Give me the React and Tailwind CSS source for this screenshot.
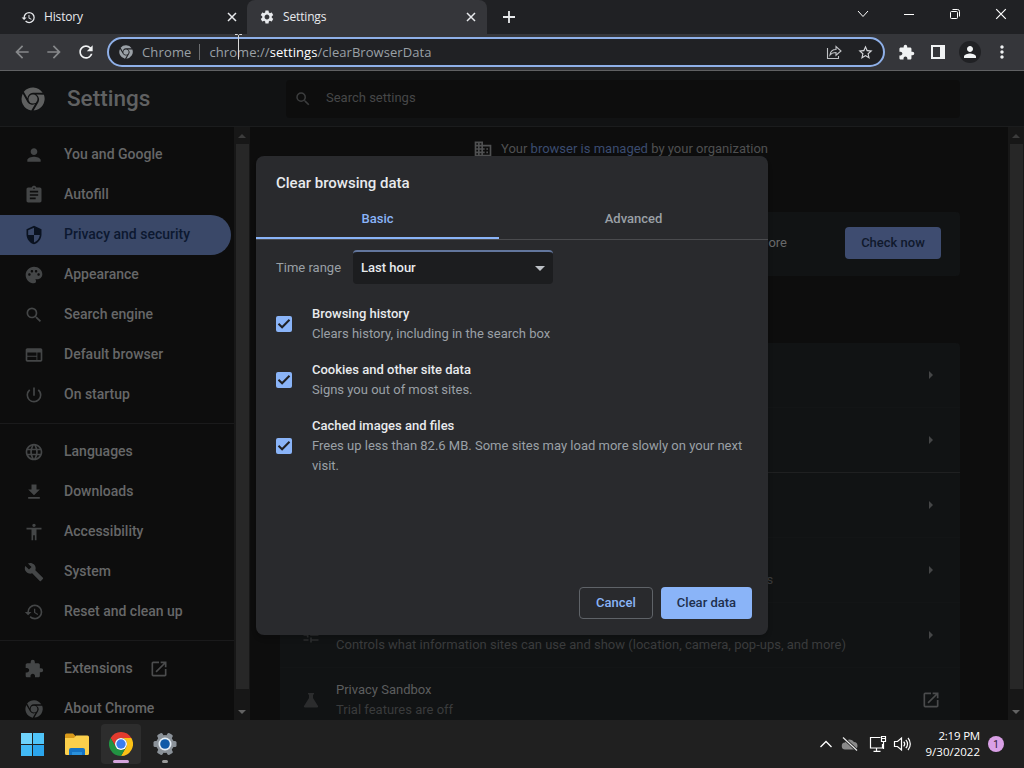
import { useState } from "react";
import {
  MdAccessibility,
  MdAssignment,
  MdBuild,
  MdDomain,
  MdExtension,
  MdFileDownload,
  MdHistory,
  MdLanguage,
  MdOpenInNew,
  MdPalette,
  MdPerson,
  MdPowerSettingsNew,
  MdSearch,
  MdSecurity,
  MdSettings,
  MdStarBorder,
  MdTune,
  MdWeb,
  MdArrowBack,
  MdArrowForward,
  MdRefresh,
  MdMoreVert,
} from "react-icons/md";

const ChromeMark = ({ className }) => (
  <svg viewBox="0 0 48 48" className={className} fill="currentColor">
    <circle cx="24" cy="24" r="9" />
    {[0, 120, 240].map((angle) => (
      <path
        key={angle}
        transform={`rotate(${angle} 24 24)`}
        d="M24 11.5h19.3A23.5 23.5 0 0 0 5.6 9.4L13 22.6A11.6 11.6 0 0 1 24 11.5z"
      />
    ))}
  </svg>
);

const ChromeLogo = () => (
  <svg viewBox="0 0 48 48" className="size-6">
    <path d="M24 12h20.78a24 24 0 0 0-41.57 0l10.4 18A12 12 0 0 1 24 12z" fill="#e33b2e" />
    <path d="M24 12h20.78a24 24 0 0 0-41.57 0l10.4 18A12 12 0 0 1 24 12z" fill="#fbc116" transform="rotate(120 24 24)" />
    <path d="M24 12h20.78a24 24 0 0 0-41.57 0l10.4 18A12 12 0 0 1 24 12z" fill="#229342" transform="rotate(240 24 24)" />
    <circle cx="24" cy="24" r="12" fill="#fff" />
    <circle cx="24" cy="24" r="9.4" fill="#3b7ded" />
  </svg>
);

const menuGroups = [
  [
    { label: "You and Google", icon: MdPerson },
    { label: "Autofill", icon: MdAssignment },
    { label: "Privacy and security", icon: MdSecurity, active: true },
    { label: "Appearance", icon: MdPalette },
    { label: "Search engine", icon: MdSearch },
    { label: "Default browser", icon: MdWeb },
    { label: "On startup", icon: MdPowerSettingsNew },
  ],
  [
    { label: "Languages", icon: MdLanguage },
    { label: "Downloads", icon: MdFileDownload },
    { label: "Accessibility", icon: MdAccessibility },
    { label: "System", icon: MdBuild },
    { label: "Reset and clean up", icon: MdHistory },
  ],
  [
    { label: "Extensions", icon: MdExtension, external: true },
    { label: "About Chrome", icon: ChromeMark, mark: true },
  ],
];

const privacyRows = [
  {},
  { divider: true },
  {},
  { sub: "Safe Browsing (protection from dangerous sites) and other security settings" },
  {
    icon: MdTune,
    sub: "Controls what information sites can use and show (location, camera, pop-ups, and more)",
  },
  { icon: "flask", title: "Privacy Sandbox", sub: "Trial features are off", external: true },
];

const CloseX = ({ className }) => (
  <svg viewBox="0 0 10 10" className={className} fill="none" stroke="currentColor">
    <path d="M1 1l8 8M9 1l-8 8" />
  </svg>
);

const TabStrip = () => (
  <div className="flex h-[34px] bg-[#202124] font-['Open_Sans',sans-serif] text-[12px] text-[#e8eaed]">
    <div className="flex h-full w-[247px] items-center pl-[21px] pr-[10px]">
      <MdHistory className="size-[15px]" />
      <span className="ml-2 flex-1 tracking-[-0.15px]">History</span>
      <CloseX className="size-[10px] stroke-[1.5]" />
    </div>
    <div className="flex h-full w-[240px] items-center rounded-t-lg bg-[#35363a] pl-[12px] pr-[11px]">
      <MdSettings className="size-4" />
      <span className="ml-2 flex-1 tracking-[-0.15px]">Settings</span>
      <CloseX className="size-[10px] stroke-[1.5]" />
    </div>
    <div className="flex flex-1 items-center pl-4">
      <svg viewBox="0 0 12 12" className="size-3" stroke="currentColor" strokeWidth="1.8">
        <path d="M6 0v12M0 6h12" />
      </svg>
    </div>
    <div className="flex h-7 text-white">
      <div className="flex w-[46px] items-center justify-center">
        <svg viewBox="0 0 12 8" className="w-3" fill="none" stroke="currentColor">
          <path d="M1 1l5 5.5L11 1" />
        </svg>
      </div>
      <div className="flex w-[46px] items-center justify-center">
        <div className="h-px w-[10px] bg-white" />
      </div>
      <div className="flex w-[46px] items-center justify-center">
        <svg viewBox="0 0 12 12" className="size-3" fill="none" stroke="currentColor">
          <rect x="1.5" y="3.5" width="7" height="7" rx="1" />
          <path d="M3.5 1.5h5a2 2 0 0 1 2 2v5" />
        </svg>
      </div>
      <div className="flex w-[46px] items-center justify-center">
        <CloseX className="size-3" />
      </div>
    </div>
  </div>
);

const Toolbar = () => (
  <div className="flex h-[37px] items-center border-b border-[#606163] bg-[#35363a] px-[6px] text-[#f1f3f4]">
    <div className="flex w-8 justify-center text-[#86888a]">
      <MdArrowBack className="size-5" />
    </div>
    <div className="flex w-8 justify-center text-[#86888a]">
      <MdArrowForward className="size-5" />
    </div>
    <div className="flex w-8 justify-center">
      <MdRefresh className="size-5" />
    </div>
    <div className="mx-[5px] flex h-[30px] w-[778px] items-center rounded-full border-2 border-[#8fb0e8] bg-[#202124] pl-[10px] pr-[9px] font-['Open_Sans',sans-serif] text-[13px] text-[#9aa0a6]">
      <ChromeMark className="size-[14px]" />
      <span className="ml-[9px] w-[49px] pt-px whitespace-nowrap tracking-[0.15px]">Chrome</span>
      <div className="mr-[10px] ml-[7.5px] h-4 w-px bg-[#6b6d70]" />
      <span className="flex-1 pt-px tracking-[0.06px]">
        chrome://<span className="text-white">settings</span>/clearBrowserData
      </span>
      <svg viewBox="0 0 16 16" className="mr-[15px] size-4" fill="none" stroke="#c0c2c5" strokeWidth="1.1">
        <path d="M1.5 4v10.5h11V12" />
        <path d="M4 11c.5-4 2.5-5.5 6-5.5V2.500l5 4.500-5 4.200V8.500C7.500 8.500 5.500 9 4 11z" />
      </svg>
      <MdStarBorder className="size-[17px] text-[#d5d7da]" />
    </div>
    <div className="flex w-8 justify-center">
      <MdExtension className="size-[17px]" />
    </div>
    <div className="flex w-8 justify-center">
      <div className="h-[14px] w-[14px] border-2 border-r-[5px] border-[#f1f3f4]" />
    </div>
    <div className="flex w-8 justify-center">
      <div className="flex size-[22px] items-center justify-center rounded-full bg-[#202124]">
        <MdPerson className="size-[18px]" />
      </div>
    </div>
    <div className="flex w-8 justify-center">
      <MdMoreVert className="size-5" />
    </div>
  </div>
);

const Scrollbar = ({ thumb }) => (
  <div className="flex w-4 shrink-0 flex-col items-center bg-[#171717]">
    <div className="flex h-[17px] items-center">
      <div className="border-x-4 border-b-4 border-x-transparent border-b-[#3c3c3c]" />
    </div>
    <div className={`w-[13px] bg-[#272727] ${thumb}`} />
    <div className="mt-auto flex h-[17px] items-center">
      <div className="border-x-4 border-t-4 border-x-transparent border-t-[#626262]" />
    </div>
  </div>
);

const MenuItem = ({ item }) => {
  const Icon = item.icon;
  return (
    <div
      className={`flex h-10 w-[231px] shrink-0 items-center rounded-r-full pl-6 ${
        item.active ? "bg-[#3a4868] text-[#0c1830]" : "text-[#666768]"
      }`}
    >
      <div className={`flex w-5 justify-center ${item.active ? "text-[#0a1220]" : "text-[#444647]"}`}>
        <Icon className={item.mark ? "size-[18px]" : "size-5"} />
      </div>
      <span className="ml-5 pb-0.5">{item.label}</span>
      {item.external && <MdOpenInNew className="ml-4 size-[20px] text-[#4b4c4d]" />}
    </div>
  );
};

const Sidebar = () => (
  <div className="flex w-[234px] shrink-0 flex-col overflow-hidden pt-2 text-sm font-medium">
    {menuGroups.map((group, i) => (
      <div key={i} className={`flex shrink-0 flex-col ${i > 0 ? "mt-2 border-t border-[#1a1a1b] pt-2" : ""}`}>
        {group.map((item) => (
          <MenuItem key={item.label} item={item} />
        ))}
      </div>
    ))}
  </div>
);

const PrivacyRow = ({ row }) => {
  const Icon = row.icon;
  return (
    <div
      className={`flex h-[65px] shrink-0 items-center border-b pr-[19px] pl-5 ${
        row.divider ? "border-[#1f2021]" : "border-[#131516]"
      }`}
    >
      <div className="flex w-[22px] justify-center text-[#2b2c2d]">
        {row.icon === "flask" ? (
          <svg viewBox="0 0 16 16" className="size-4" fill="currentColor">
            <path d="M5 1h6v1.500h-1V6l5 8a1 1 0 0 1-1 1.500H2A1 1 0 0 1 1 14l5-8V2.500H5z" />
          </svg>
        ) : (
          Icon && <Icon className="size-5" />
        )}
      </div>
      <div className="ml-[14px] flex-1 whitespace-nowrap leading-5">
        <div className="h-5 text-[#5c5d5e]">{row.title}</div>
        <div className="h-5 text-[#3a3b3c]">{row.sub}</div>
      </div>
      {row.external ? (
        <MdOpenInNew className="size-5 text-[#4a4b4c]" />
      ) : (
        <div className="mr-[8px] border-y-4 border-l-4 border-y-transparent border-l-[#454647]" />
      )}
    </div>
  );
};

const SettingsContent = () => (
  <div className="flex flex-1 flex-col overflow-hidden pl-[30px] text-[13px]">
    <div className="flex h-[85px] w-[680px] shrink-0 items-start justify-center pt-[12px] pl-px text-[#4f5051]">
      <MdDomain className="mr-2 size-5" />
      <span className="leading-5">
        Your <span className="text-[#3b4c70]">browser is managed</span> by your organization
      </span>
    </div>
    <div className="flex h-16 w-[680px] shrink-0 items-center justify-end rounded bg-[#111314] pr-[19px] pb-0.5">
      <span className="mr-[58px] text-[#68696a]">
        Chrome can help keep you safe from data breaches, bad extensions, and more
      </span>
      <button className="h-8 w-24 rounded bg-[#3e4c70] font-medium text-[#10192c]">Check now</button>
    </div>
    <div className="mt-[67px] flex w-[680px] shrink-0 flex-col rounded-t bg-[#111314]">
      {privacyRows.map((row, i) => (
        <PrivacyRow key={i} row={row} />
      ))}
    </div>
  </div>
);

const Checkbox = ({ checked, onChange }) => (
  <button
    onClick={onChange}
    className={`flex size-4 shrink-0 items-center justify-center rounded-xs ${
      checked ? "bg-[#8ab4f8]" : "border-2 border-[#9aa0a6]"
    }`}
  >
    {checked && (
      <svg viewBox="0 0 16 16" className="size-4" fill="none" stroke="#202124" strokeWidth="2">
        <path d="M2.500 7.800l3.600 3.500 7.400-7.600" />
      </svg>
    )}
  </button>
);

const options = [
  { title: "Browsing history", text: "Clears history, including in the search box" },
  { title: "Cookies and other site data", text: "Signs you out of most sites." },
  {
    title: "Cached images and files",
    text: "Frees up less than 82.6 MB. Some sites may load more slowly on your next visit.",
  },
];

const ClearDataDialog = () => {
  const [checked, setChecked] = useState([true, true, true]);

  const toggle = (index) => {
    setChecked(checked.map((value, i) => (i === index ? !value : value)));
  };

  return (
    <div className="absolute left-[256px] top-[156px] flex h-[479px] w-[512px] flex-col rounded-lg bg-[#292a2d] text-[13px] text-[#e8eaed] shadow-md">
      <h2 className="px-5 pt-[17px] text-[15px] leading-5 font-medium">Clear browsing data</h2>
      <div className="mt-[5px] flex h-[42px] border-b border-[#4a4b4e] text-center leading-[42px] font-medium">
        <div className="-mb-px h-[41px] w-[243px] border-b-2 border-[#8ab4f8] text-[#8ab4f8]">Basic</div>
        <div className="flex-1 text-[#9aa0a6]">Advanced</div>
      </div>
      <div className="mt-[10px] flex items-center pl-5">
        <span className="w-[77px] pt-px text-[#9aa0a6]">Time range</span>
        <div className="flex h-[34px] w-[200px] items-center justify-between rounded border-t-2 border-[#62769c] bg-[#1c1d1f] pl-2 pr-2 font-medium">
          Last hour
          <div className="border-x-[5px] border-t-[5px] border-x-transparent border-t-[#bdc1c6]" />
        </div>
      </div>
      <div className="mt-5 flex flex-col gap-4 px-5 leading-5">
        {options.map((option, i) => (
          <div key={option.title} className="flex items-center">
            <Checkbox checked={checked[i]} onChange={() => toggle(i)} />
            <div className="ml-5">
              <div className="font-medium">{option.title}</div>
              <div className="text-[#9aa0a6]">{option.text}</div>
            </div>
          </div>
        ))}
      </div>
      <div className="mt-auto flex justify-end gap-2 p-4 font-medium">
        <button className="h-8 w-[74px] rounded border border-[#5f6368] text-[#8ab4f8]">Cancel</button>
        <button className="h-8 w-[91px] rounded bg-[#8ab4f8] text-[#202f4c]">Clear data</button>
      </div>
    </div>
  );
};

const Taskbar = () => (
  <div className="flex h-12 items-center bg-[#202020] pr-5 pl-3 text-white">
    <div className="flex w-10 justify-center">
      <div className="grid size-[23px] grid-cols-2 gap-px">
        <div className="bg-[#6fd3fb]" />
        <div className="bg-[#4fc4f8]" />
        <div className="bg-[#42baf5]" />
        <div className="bg-[#2ba5ec]" />
      </div>
    </div>
    <div className="ml-[5px] flex w-10 justify-center">
      <svg viewBox="0 0 26 24" className="w-[26px]">
        <path d="M1 3a1.500 1.500 0 0 1 1.500-1.500H9L11.500 4v4H1z" fill="#d99a1a" />
        <path d="M1 6h9l2-2.500h11.500A1.500 1.500 0 0 1 25 5v16.500A1.500 1.500 0 0 1 23.500 23h-21A1.500 1.500 0 0 1 1 21.500z" fill="#fbcf4b" />
        <path d="M5 23v-5a2 2 0 0 1 2-2h12a2 2 0 0 1 2 2v5z" fill="#1673c4" />
        <path d="M8 20h10v3H8z" fill="#2a91dc" />
      </svg>
    </div>
    <div className="ml-1 flex h-10 w-10 flex-col items-center rounded bg-[#2d2d2d] pt-2">
      <ChromeLogo />
      <div className="mt-[4px] h-[3px] w-4 rounded-full bg-[#d5a4dd]" />
    </div>
    <div className="ml-1 flex h-10 w-10 flex-col items-center pt-2">
      <svg viewBox="0 0 24 24" className="size-6">
        <g fill="#8b9299">
          <circle cx="12" cy="12" r="9" />
          {[30, 90, 150].map((angle) => (
            <rect key={angle} x="9" y="0.5" width="6" height="23" rx="1.5" transform={`rotate(${angle} 12 12)`} />
          ))}
        </g>
        <circle cx="12" cy="12" r="6.5" fill="#e4edf5" />
        <circle cx="12" cy="12" r="4.8" fill="#0f5aa8" />
      </svg>
      <div className="mt-[4px] h-[3px] w-[6px] rounded-full bg-[#9a9a9a]" />
    </div>
    <div className="ml-auto flex items-center">
      <svg viewBox="0 0 12 8" className="w-3" fill="none" stroke="currentColor" strokeWidth="1.3">
        <path d="M.5 7L6 1.500 11.500 7" />
      </svg>
      <svg viewBox="0 0 18 16" className="ml-[9px] w-[18px]">
        <path d="M4.500 13.500a3.500 3.500 0 0 1-.5-7A5 5 0 0 1 13 6a3.800 3.800 0 0 1 .5 7.500z" fill="#8a8a8a" />
        <path d="M2 1.500l14 13" stroke="#202020" strokeWidth="3" />
        <path d="M2 1.500l14 13" stroke="#e8e8e8" strokeWidth="1.200" />
      </svg>
      <svg viewBox="0 0 18 18" className="ml-[10px] w-[18px]" fill="none" stroke="currentColor" strokeWidth="1.200">
        <path d="M11.500 2.500H1.500v10.500h12V9M4.500 16.400h7M7.500 13v3.400" />
        <path d="M12.500 1.500h4v5h-4zM14.500 6.500V14M12.500 3.500h4" />
      </svg>
      <svg viewBox="0 0 18 16" className="ml-[6px] w-[18px]" fill="none" stroke="currentColor" strokeWidth="1.200">
        <path d="M1.500 5.500h3l4-3.500v12l-4-3.500h-3zM10.700 5.700a3.500 3.500 0 0 1 0 4.600M12.800 3.800a6 6 0 0 1 0 8.400M15 2a9 9 0 0 1 0 12" />
      </svg>
      <div className="ml-[5px] w-16 text-right font-['Open_Sans',sans-serif] text-[11.5px] leading-4 whitespace-nowrap">
        <div className="tracking-[-0.2px]">2:19 PM</div>
        <div>9/30/2022</div>
      </div>
      <div className="ml-2 flex size-4 items-center justify-center rounded-full bg-[#d9a0e6] text-[10px] text-[#2b1a30]">
        1
      </div>
    </div>
  </div>
);

const App = () => {
  return (
    <div className="relative flex h-[768px] w-[1024px] flex-col overflow-hidden bg-[#0d0d0d] font-['Roboto',sans-serif]">
      <TabStrip />
      <Toolbar />
      <div className="flex h-14 shrink-0 items-center border-b border-[#1b1c1d] bg-[#111213]">
        <ChromeMark className="ml-[21px] size-6 text-[#5f6060]" />
        <h1 className="ml-[22px] w-[219px] text-[22.5px] font-medium text-[#606162]">Settings</h1>
        <div className="flex h-[38px] w-[674px] items-center rounded bg-[#0d0d0d] pl-2 text-[13px] text-[#464748]">
          <MdSearch className="size-[18px] text-[#3c3d3e]" />
          <span className="ml-[14px] pb-0.5">Search settings</span>
        </div>
      </div>
      <div className="flex min-h-0 flex-1">
        <Sidebar />
        <Scrollbar thumb="h-[545px]" />
        <SettingsContent />
        <Scrollbar thumb="h-[545px]" />
      </div>
      <Taskbar />
      <ClearDataDialog />
      {/* text cursor over the address bar */}
      <svg viewBox="0 0 8 26" className="absolute left-[234px] top-[34px] h-[26px] w-2" fill="none" stroke="#d8d8d8">
        <path d="M1 .5h2.500l1 1 1-1H8M4.500 1.500v24" />
      </svg>
    </div>
  );
};

export default App;
